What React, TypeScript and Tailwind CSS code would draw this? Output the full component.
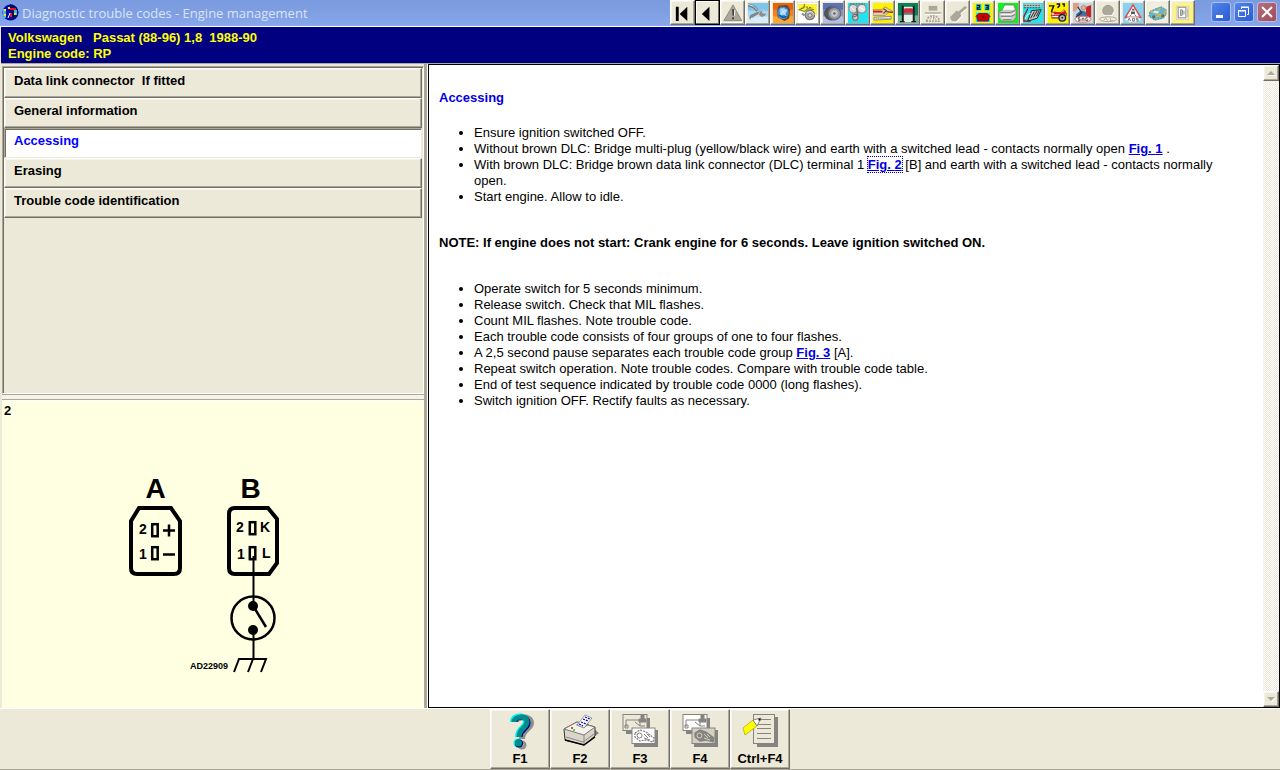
import type { ReactNode } from 'react';

type Tool = { label: string; art: ReactNode; focused?: boolean };

const tools: Tool[] = [
  {
    label: 'First',
    art: <path d="M3 4h3v15H3zM15 4v15L7 11.500z" fill="#000" />,
  },
  {
    label: 'Previous',
    focused: true,
    art: <path d="M12 4v15L4 11.500z" fill="#000" />,
  },
  {
    label: 'Warnings',
    art: (
      <>
        <path d="M10.500 2L19.500 18.500H1z" fill="#aca899" stroke="#8b887a" strokeWidth="1" />
        <path d="M9.500 6.500h2.500l-.5 7h-1.500zM9.500 15h2v2h-2z" fill="#44423c" />
        <path d="M12.500 7l-.5 6.500M2 20.500h18" stroke="#fff" />
      </>
    ),
  },
  {
    label: 'Repair',
    art: (
      <>
        <rect width="21" height="21" fill="#7cc6ee" />
        <rect y="8" width="21" height="6" fill="#a4d9f3" />
        <rect y="14" width="21" height="7" fill="#d6eef9" />
        <path d="M0 2l6 2 4 4" stroke="#777d82" strokeWidth="3" fill="none" />
        <path d="M0 1.500l6 2 4 4" stroke="#e4e4e0" strokeWidth="1" fill="none" />
        <path d="M4 17c-2-2 0-4 2-4l7-3" stroke="#7f868c" strokeWidth="3.500" fill="none" />
        <path d="M5 16l9-5" stroke="#d8dde0" strokeWidth="1.500" />
        <path d="M13 8l3-1-1 3 2 1 3-1-2 4-4 1-3-3z" fill="#8a9096" stroke="#dfe5e8" strokeWidth=".6" />
        <circle cx="4" cy="17" r="1.500" fill="#d6eef9" />
      </>
    ),
  },
  {
    label: 'Engine management',
    art: (
      <>
        <rect width="21" height="21" fill="#e8640c" />
        <path d="M0 7h21v14H0z" fill="#f58216" />
        <path d="M0 14h21v7H0z" fill="#ffa630" />
        <path d="M6 3l9-1 3 5-1 9-5 3-7-4-1-6z" fill="#5b4a3a" />
        <ellipse cx="10.500" cy="10.500" rx="6" ry="6.500" fill="#3f8fd4" />
        <path d="M7 7l4-2 4 3-2 4-5 1z" fill="#9fd4f6" />
        <path d="M6 12l4 3 5-1" stroke="#1c4c86" strokeWidth="1.200" fill="none" />
        <path d="M8 5l6 9M7 12l8-5" stroke="#d8efff" strokeWidth=".8" />
      </>
    ),
  },
  {
    label: 'Timing belt',
    art: (
      <>
        <rect width="21" height="21" fill="#fff" />
        <path d="M0 1h20v12l-7-4-12-1z" fill="#fff03a" />
        <path d="M7 1l-1 4-5 2 6 2 3-3 7 1" stroke="#8a9a10" strokeWidth="1.300" fill="none" />
        <path d="M3 6l4-2 8 1" stroke="#5c6a0c" strokeDasharray="2 1" fill="none" />
        <circle cx="12.500" cy="12.500" r="5" fill="#a9a9a9" stroke="#777" strokeWidth="1.200" />
        <path d="M9 10l5-1 3 3" stroke="#eee" fill="none" />
        <circle cx="12.500" cy="13" r="2" fill="#d8d8d8" stroke="#777" />
        <path d="M7 13l-3-2" stroke="#888" strokeWidth="2" />
      </>
    ),
  },
  {
    label: 'Wheels',
    art: (
      <>
        <rect width="21" height="21" fill="#5c74b4" />
        <rect y="7" width="21" height="14" fill="#8397cc" />
        <rect y="14" width="21" height="7" fill="#b3c0e4" />
        <ellipse cx="9" cy="11" rx="8" ry="7.500" fill="#50525c" />
        <circle cx="12" cy="11" r="6.500" fill="#9a9da4" stroke="#666a74" strokeWidth="1.500" />
        <circle cx="12" cy="11" r="4" fill="#c4c6cb" stroke="#7c8088" strokeDasharray="1 1" />
        <circle cx="12" cy="11" r="1.300" fill="#62656c" />
      </>
    ),
  },
  {
    label: 'Drive belts',
    art: (
      <>
        <rect width="21" height="21" fill="#20e4f0" />
        <path d="M1 2h18v8l-8 1v8H5l-1-8-3-3z" fill="#999" />
        <circle cx="5.500" cy="6" r="4.500" fill="#d8d8d8" stroke="#888" />
        <circle cx="14.500" cy="6" r="4.500" fill="#e4e4e4" stroke="#888" />
        <path d="M3 4l4 4M12 4l5 4" stroke="#fff" />
        <circle cx="7.500" cy="15" r="3" fill="#ccc" stroke="#666" />
        <path d="M9 5l1 8-5 2" stroke="#555" fill="none" />
        <path d="M2 1h16" stroke="#555" strokeDasharray="2 1" />
      </>
    ),
  },
  {
    label: 'Service',
    art: (
      <>
        <rect width="21" height="21" fill="#fff200" />
        <path d="M0 7h9l4-3 3 2 5 3-5 1-3 3H0z" fill="#d8d4c8" stroke="#8d7a28" strokeWidth=".7" />
        <path d="M0 8h10v2H0z" fill="#e01818" />
        <path d="M11 6l3 2-3 3M14 9l7 1" stroke="#8a2a10" strokeWidth="1.200" fill="none" />
        <path d="M1 15l18-1v3L1 18z" fill="#e8e8e8" stroke="#777" strokeWidth=".8" />
        <path d="M3 16.500h15" stroke="#777" strokeDasharray="1 1" />
      </>
    ),
  },
  {
    label: 'Lifting points',
    art: (
      <>
        <rect width="21" height="21" fill="#0d8058" />
        <rect y="13" width="21" height="8" fill="#6fb79c" />
        <path d="M6 4h10v16H6z" fill="#e4f1ea" />
        <path d="M5 3v16M16.500 3v16" stroke="#1a1a1a" strokeWidth="2" />
        <path d="M7 6h8l1 4H6z" fill="#e0283c" stroke="#801824" strokeWidth=".6" />
        <path d="M5 11.500h12" stroke="#333" strokeWidth="1.200" />
        <path d="M2 19.500h5M14 19.500h5" stroke="#222" strokeWidth="1.300" />
      </>
    ),
  },
  {
    label: 'Tyres',
    art: (
      <>
        <path d="M6 3h9v5H6z" fill="#aca899" />
        <path d="M2 10.500h17" stroke="#aca899" strokeWidth="1.500" />
        <path d="M2 12h17" stroke="#fff" />
        <path d="M4 19a6.500 5.500 0 0 1 13 0z" fill="#f4f2ea" stroke="#aca899" strokeWidth="2" strokeDasharray="2 1" />
        <path d="M7 18l2-3m2 3v-4m3 4l-2-3" stroke="#aca899" />
      </>
    ),
  },
  {
    label: 'Keys',
    art: (
      <>
        <path d="M18 3l-7 6-2-1-7 7 2 4 4 1 6-6-1-3 7-6z" fill="#aca899" />
        <path d="M5 20h4l6-7M14 11l6-5" stroke="#fff" fill="none" />
      </>
    ),
  },
  {
    label: 'Service intervals',
    art: (
      <>
        <rect width="21" height="21" fill="#fff200" />
        <path d="M3 1h6v7H3zM12 1h6v7h-6zM3 10h15v10H3z" fill="#20e4f0" />
        <path d="M4 2.500h3v2H4.500v2H8M13 2.500h3v4h-3m.5-2H16" stroke="#000" strokeWidth="1.200" fill="none" />
        <path d="M6 11h9l3 3-1 1-1 4H5l-1-4-1-1z" fill="#d00000" stroke="#600" strokeWidth=".7" />
        <path d="M9 14h3v2H9z" fill="#700" />
      </>
    ),
  },
  {
    label: 'Air conditioning',
    art: (
      <>
        <rect width="21" height="21" fill="#10f020" />
        <path d="M7 2h10l2 6v7l-3 4H4l-3-3V9l4-2z" fill="#c8c8c4" stroke="#7a7a78" strokeWidth=".8" />
        <path d="M7 3h9l1 4H5z" fill="#fff" />
        <path d="M2 10h11l5-2M3 14h11l4-2M5 17.500h9" stroke="#777" fill="none" />
        <path d="M3 12h11l4-2M4 15.700h10" stroke="#fff" fill="none" />
      </>
    ),
  },
  {
    label: 'Wiring diagrams',
    art: (
      <>
        <rect width="21" height="21" fill="#20e4f0" />
        <path d="M1 2.500h18" stroke="#c8c8c8" strokeWidth="3" />
        <path d="M1 2.500h18M1 5h17" stroke="#444" strokeDasharray="2 1" />
        <path d="M5 6l-4 8v5h7" stroke="#a01010" strokeWidth="1.300" fill="none" />
        <path d="M9 8l10-1-4 9-10 3z" fill="#c4c4c4" stroke="#222" />
        <path d="M8 16l4-7m-1 6l4-7m-1 6l3-6" stroke="#222" />
        <path d="M2 17l3-5 3-1" stroke="#fff" fill="none" />
      </>
    ),
  },
  {
    label: 'Troubleshooter',
    art: (
      <>
        <rect width="21" height="21" fill="#fff200" />
        <path d="M1 3h5l-2 5v2M9 1h3v2l-2 2M15 1h2v3" stroke="#111" strokeWidth="1.500" fill="none" />
        <path d="M4 10h9l4-3 3 6-6 3H4z" fill="#fff" stroke="#722" strokeWidth=".6" />
        <path d="M6 9l8 1 4-2 2 4H6z" fill="#e01818" />
        <path d="M3 13h9M4 15.500h8" stroke="#b02020" />
        <circle cx="15" cy="15.500" r="3.500" fill="#bbb" stroke="#222" strokeWidth="1.500" />
        <circle cx="15" cy="15.500" r="1" fill="#222" />
      </>
    ),
  },
  {
    label: 'Airbags',
    art: (
      <>
        <rect width="21" height="21" fill="#c4d8e6" />
        <path d="M0 0h6v5l-4 4H0z" fill="#d9a08c" />
        <path d="M14 4l5-2v13h-6z" fill="#c82420" />
        <path d="M3 12l5-4 5 1 2 5-6 1-4 1z" fill="#3f6ea4" />
        <circle cx="11" cy="5" r="2.500" fill="#e7ad89" stroke="#854" strokeWidth=".5" />
        <path d="M5 4l4 6-6 5" stroke="#333" strokeWidth="1.200" fill="none" />
        <ellipse cx="10.500" cy="17" rx="8.500" ry="3.200" fill="#fff" stroke="#d56a64" />
        <path d="M7.500 15.500H5.500v1.500h2v1.500h-2M9.500 19v-3h2v3M15.500 15.500h-2v3h2v-1.500" stroke="#555" fill="none" />
      </>
    ),
  },
  {
    label: 'Lamps',
    art: (
      <>
        <circle cx="10.500" cy="8" r="5.500" fill="#aca899" stroke="#9c9888" />
        <path d="M15 12l2-3M6 13h9" stroke="#fff" fill="none" />
        <ellipse cx="10.500" cy="17" rx="9" ry="2.500" fill="#f0ede2" stroke="#aca899" />
        <path d="M6 18.500l2-3 2 3m3-3v3h3" stroke="#aca899" fill="none" />
      </>
    ),
  },
  {
    label: 'Anti-lock brakes',
    art: (
      <>
        <rect width="21" height="21" fill="#85d2f4" />
        <path d="M10.500 2l8 13H2.500z" fill="#fff" stroke="#dc5048" strokeWidth="1.600" />
        <path d="M9.500 6h2.500v2H9.500zM8.500 9h4v2.500h-4z" fill="#555" />
        <path d="M9 12l-2 2m5-2l2 2" stroke="#666" />
        <ellipse cx="10.500" cy="17.500" rx="8" ry="2.800" fill="#fff" stroke="#b8d6e4" />
        <path d="M5 19l1.500-3 1.500 3m2-3h2v3h-2zm6 0h-2v1.500h2v1.500h-2" stroke="#666" strokeWidth=".9" fill="none" />
      </>
    ),
  },
  {
    label: 'Body electrics',
    art: (
      <>
        <rect width="21" height="21" fill="#f1eedf" />
        <path d="M2 9l6-3 6-2 5 3v5l-3 4-9 2-6-4z" fill="#66b6cc" stroke="#5b8e9c" strokeDasharray="2 1" />
        <path d="M2 8l6 3 5-6m-5 6l8 2 3-5M4 15l12-2" stroke="#e2b53c" fill="none" strokeWidth="1.200" />
        <path d="M7 8l5 1-2 2-5-1z" fill="#d4edf2" />
        <circle cx="6" cy="14.500" r="1.700" fill="#5a6a70" />
        <circle cx="15.500" cy="13.500" r="1.700" fill="#5a6a70" />
      </>
    ),
  },
  {
    label: 'Switches',
    art: (
      <>
        <rect width="21" height="21" fill="#fff676" />
        <rect x="3.500" y="3.500" width="13" height="14" fill="#efecdf" stroke="#d4d1c0" />
        <rect x="5.500" y="4.500" width="8" height="11" fill="#fff" stroke="#8f8d82" />
        <path d="M8 7l2 .5v5l-2 1zM11.500 8v4" stroke="#888" fill="#ccc" />
        <path d="M15.500 6v9" stroke="#b9b6a6" />
      </>
    ),
  },
];

const sections = [
  'Data link connector  If fitted',
  'General information',
  'Accessing',
  'Erasing',
  'Trouble code identification',
];

function Diagrams({ dark }: { dark: boolean }) {
  return (
    <>
      <path d="M8 6h24v16H8zM16 18h24v17H16z" fill="#868480" />
      <rect x="5" y="2.500" width="24" height="16" fill={dark ? '#fff' : '#ece9d8'} stroke="#868480" />
      <path d="M8 15V8h14v6h5M10 13v3H7v-3z" fill="none" stroke="#868480" />
      <path d="M23 3h3v4h2v3h-7V7h2zM17 10l5 4" fill="#868480" stroke="#868480" />
      <rect x="14" y="16" width="23" height="15.500" fill={dark ? '#d4d1c3' : '#fff'} stroke="#868480" />
      <path
        d="M17 21l5-3 6 2 8 6-1 4-7-2-6 1-5-4z"
        fill={dark ? '#868480' : '#fff'}
        stroke="#868480"
        strokeWidth="1.300"
        strokeDasharray={dark ? undefined : '2 1'}
      />
      <circle cx="21.500" cy="23.500" r="2.500" fill="none" stroke={dark ? '#d4d1c3' : '#868480'} />
      <path d="M26 22l4 4m-1-4l3 3m-6 1l6 2" stroke={dark ? '#d4d1c3' : '#868480'} />
    </>
  );
}

const functionKeys: { label: string; title: string; art: ReactNode }[] = [
  {
    label: 'F1',
    title: 'Help',
    art: (
      <>
        <g fill="none" stroke="#908e88" strokeWidth="6">
          <path d="M18 10c0-6 15-7 15 1 0 6-9 6-9 16" />
          <circle cx="24" cy="33" r="1.500" />
        </g>
        <g fill="none" stroke="#00f0f0" strokeWidth="6">
          <path d="M15 10c0-7 13-8 13 0 0 6-8 6-8 15" />
          <circle cx="20" cy="31" r="1.500" />
        </g>
        <path d="M17 10c0-6 13-7 13 1 0 6-8 6-8 14" fill="none" stroke="#000080" strokeWidth="5" />
        <path d="M16 10c0-6 13-7 13 0 0 6-8 6-8 15" fill="none" stroke="#008c8c" strokeWidth="5" />
        <circle cx="21" cy="31.500" r="4" fill="#000080" />
        <circle cx="20.500" cy="31" r="3.500" fill="#008c8c" />
      </>
    ),
  },
  {
    label: 'F2',
    title: 'Print',
    art: (
      <>
        <path d="M26 33l15-12-5-4-12 9z" fill="#8b8983" />
        <path d="M6 17l13-7 18 5v9L26 33 7 28z" fill="#d9d6c9" stroke="#333" />
        <path d="M6 17l20 6 11-8-18-5z" fill="#f4f2e9" stroke="#777" />
        <path d="M26 23v9M8 25l17 5 11-8" stroke="#888" fill="none" />
        <path d="M7 28l19 5 11-8" stroke="#000" strokeWidth="1.500" fill="none" />
        <path d="M18 13l8 3 5-4-8-2z" fill="#555" />
        <path d="M19 13l8-10 7 3-8 10z" fill="#fff" stroke="#777" strokeWidth=".7" />
        <path d="M27 5l5 2m-7 0l5 2m-7 1l5 2m-7 0l4 2" stroke="#0000d0" strokeWidth="1.300" strokeDasharray="2 1" />
        <path d="M13 16h2" stroke="#f00" strokeWidth="1.500" />
        <path d="M15 18h2" stroke="#0d0" strokeWidth="1.500" />
      </>
    ),
  },
  { label: 'F3', title: 'Previous figure', art: <Diagrams dark={false} /> },
  { label: 'F4', title: 'Next figure', art: <Diagrams dark /> },
  {
    label: 'Ctrl+F4',
    title: 'Notes',
    art: (
      <>
        <path d="M19 5h21v30H19z" fill="#868480" />
        <rect x="15.500" y="2.500" width="21" height="29" fill="#ece9d8" stroke="#868480" />
        <path d="M22 7.500h11M20 12.500h13M19 16.500h14M19 21.500h14M19 26.500h14" stroke="#868480" />
        <path d="M5 16l10-8 4 6-12 9z" fill="#ff0" stroke="#989500" strokeWidth=".6" />
        <path d="M15 8l8-2-4 8z" fill="#fff" stroke="#868480" />
        <path d="M20.500 6.500h2v2h-2z" fill="#111" />
      </>
    ),
  },
];

const raised =
  'border border-t-white border-l-white border-r-[#716f64] border-b-[#716f64] shadow-[inset_-1px_-1px_0_#aca899,inset_1px_1px_0_#f6f4ea]';

function TitleBar() {
  return (
    <header className="flex h-[27px] items-start border-b border-white bg-linear-to-b from-[#7b9be0] via-[#809fe3] to-[#87a8ea]">
      <svg className="mt-1 ml-0.5 size-[17px] shrink-0" viewBox="0 0 17 17" aria-hidden="true">
        <circle cx="8.500" cy="8.500" r="8" fill="#0808a8" />
        <path d="M8 0a8.500 8.500 0 0 1 8 10l-5 6z" fill="#001060" />
        <path d="M1 5h3v9H1z" fill="#38b8e8" />
        <path d="M2 5h2v2H2zM2 10h2v2H2z" fill="#f4e820" />
        <path d="M8 4h6v2H8zM8 9h2v4H8z" fill="#e81818" />
        <path d="M12 6h3v5h-3z" fill="#30c0f0" />
        <path d="M12 9h2v2h-2zM6 3h2v2H6z" fill="#ffe020" />
        <path d="M8 9l-2 5" stroke="#fff" />
      </svg>
      <h1 className="ml-[3px] flex-1 truncate font-['Open_Sans','Noto_Sans',sans-serif] text-[13px] leading-[26px] font-medium text-[#d8e4f8]">
        Diagnostic trouble codes - Engine management
      </h1>
      <div className="flex">
        {tools.map((tool) => (
          <button
            key={tool.label}
            type="button"
            aria-label={tool.label}
            className={
              tool.focused
                ? 'h-[25px] w-[25px] border border-black bg-[#ece9d8] pl-0.5 shadow-[inset_-1px_-1px_0_#716f64,inset_1px_1px_0_#fff]'
                : `h-[25px] w-[25px] bg-[#ece9d8] pl-0.5 ${raised}`
            }
          >
            <svg className="size-5" viewBox="0 0 21 21" aria-hidden="true">
              {tool.art}
            </svg>
          </button>
        ))}
      </div>
      <div className="mt-0.5 mr-[3px] ml-4 flex gap-[3px]">
        <button type="button" aria-label="Minimize" className="size-5 rounded-[3px] border border-[#a9c0f0] bg-linear-to-br from-[#5484ea] to-[#2a5bd3]">
          <svg className="size-[18px]" viewBox="0 0 18 18" aria-hidden="true">
            <path d="M4 12h7v3H4z" fill="#fff" />
          </svg>
        </button>
        <button type="button" aria-label="Restore" className="size-5 rounded-[3px] border border-[#a9c0f0] bg-linear-to-br from-[#5484ea] to-[#2a5bd3]">
          <svg className="size-[18px]" viewBox="0 0 18 18" fill="none" stroke="#fff" aria-hidden="true">
            <path d="M6.500 6V4.500h7v7H12M6 4h8" />
            <path d="M3.500 7.500h7v6h-7zM3 8h8" />
          </svg>
        </button>
        <button type="button" aria-label="Close" className="size-5 rounded-[3px] border border-[#c9b8dc] bg-linear-to-br from-[#b2707e] to-[#a14a5c]">
          <svg className="size-[18px]" viewBox="0 0 18 18" aria-hidden="true">
            <path d="M4 4l10 10m0-10l-10 10" stroke="#fff" strokeWidth="2" />
          </svg>
        </button>
      </div>
    </header>
  );
}

function Figure() {
  return (
    <svg
      className="mt-[46px] ml-[108px] h-[220px] w-[190px] font-['Liberation_Sans',Arial,sans-serif] font-bold"
      viewBox="0 0 190 220"
      role="img"
      aria-label="Data link connector terminals"
    >
      <g fontSize="28" textAnchor="middle">
        <text x="45.500" y="33">A</text>
        <text x="140.500" y="33">B</text>
      </g>
      <g fill="none" stroke="#000" strokeWidth="4">
        <path d="M29 43h32l9 13v47q0 6-6 6H27q-6 0-6-6V56z" />
        <path d="M125 43h33l9 11v44l-8 11h-34q-6 0-6-6V49q0-6 6-6z" />
      </g>
      <g fill="none" stroke="#000" strokeWidth="2.500">
        <rect x="42.200" y="59.200" width="5.500" height="12" />
        <rect x="42.200" y="82.200" width="5.500" height="12" />
        <rect x="139.800" y="57.200" width="5.500" height="12" />
        <rect x="139.800" y="82.200" width="5.500" height="12" />
        <path d="M53 65.500h12M59 59.500v12M53 89.500h12" />
      </g>
      <g fontSize="14">
        <text x="29" y="69">2</text>
        <text x="29" y="94">1</text>
        <text x="126" y="67">2</text>
        <text x="127" y="94">1</text>
        <text x="150" y="67">K</text>
        <text x="152" y="93">L</text>
      </g>
      <g fill="none" stroke="#000">
        <path d="M143.500 91v50M143.500 165v28" strokeWidth="2" />
        <circle cx="143" cy="153" r="21.500" strokeWidth="2.500" />
        <path d="M145 144l11 18" strokeWidth="2.500" />
        <path d="M124 207l5-13h27l-5 13M143 194l-5 13" strokeWidth="2" />
      </g>
      <circle cx="143" cy="141" r="5" />
      <circle cx="143" cy="165" r="5" />
      <text x="80" y="204" fontSize="9">AD22909</text>
    </svg>
  );
}

function FigLink({ n, focused }: { n: number; focused?: boolean }) {
  return (
    <a
      href={`#fig-${n}`}
      className={
        focused
          ? 'font-bold text-[#0000e0] underline outline-1 outline-dotted outline-[#0000b0]'
          : 'font-bold text-[#0000e0] underline'
      }
    >
      Fig. {n}
    </a>
  );
}

function ScrollBar() {
  return (
    <div className="flex w-4 shrink-0 flex-col justify-between bg-[repeating-conic-gradient(#ece9d8_0_25%,#fff_0_50%)] bg-size-[2px_2px]">
      <button type="button" aria-label="Scroll up" className={`size-4 bg-[#ece9d8] ${raised}`}>
        <svg className="size-3.5" viewBox="0 0 14 14" aria-hidden="true">
          <path d="M4 10l4-4 4 4z" fill="#fff" />
          <path d="M3 9l4-4 4 4z" fill="#aca899" />
        </svg>
      </button>
      <button type="button" aria-label="Scroll down" className={`size-4 bg-[#ece9d8] ${raised}`}>
        <svg className="size-3.5" viewBox="0 0 14 14" aria-hidden="true">
          <path d="M4 6l4 4 4-4z" fill="#fff" />
          <path d="M3 5l4 4 4-4z" fill="#aca899" />
        </svg>
      </button>
    </div>
  );
}

export default function App() {
  return (
    <div className="flex min-h-screen flex-col bg-[#ece9d8] font-['Liberation_Sans',Arial,sans-serif] text-[13px] leading-4 text-black">
      <TitleBar />
      <div className="ml-px border-b border-[#aca899] bg-[#000080] px-[7px] pt-[3px] pb-px font-bold whitespace-pre text-[#ffff00]">
        <p>Volkswagen   Passat (88-96) 1,8  1988-90</p>
        <p>Engine code: RP</p>
      </div>

      <main className="flex flex-1">
        <div className="flex w-[428px] shrink-0 flex-col border-r border-white pl-0.5">
          <div className="flex flex-1 flex-col border-r-[3px] border-[#aca899] pt-0.5">
            <nav className="h-[328px] border-t border-r border-b border-l border-t-[#aca899] border-r-white border-b-white border-l-[#aca899] shadow-[inset_1px_1px_0_#716f64]">
              <div className="flex flex-col pt-px pr-px pl-px">
                {sections.map((name) => (
                  <button
                    key={name}
                    type="button"
                    className={
                      name === 'Accessing'
                        ? 'h-[30px] border border-t-[#aca899] border-r-[#ece9d8] border-b-[#ece9d8] border-l-[#aca899] bg-white pb-1 pl-[9px] text-left font-bold whitespace-pre text-[#0000ff] shadow-[inset_1px_1px_0_#716f64]'
                        : `h-[30px] pb-1 pl-[9px] text-left font-bold whitespace-pre ${raised}`
                    }
                  >
                    {name}
                  </button>
                ))}
              </div>
            </nav>
            <div className="h-1.5 border-t border-b border-[#aca899] bg-[#f6f4ea]" />
            <section className="flex-1 border-t border-white bg-[#ffffe1] pb-5">
              <p className="pt-0.5 pl-0.5 font-bold">2</p>
              <Figure />
            </section>
          </div>
        </div>

        <article className="flex min-w-0 flex-1 border border-black bg-white">
          <div className="flex-1 pt-[25px] pr-8 pl-[10px]">
            <h2 className="font-bold text-[#0000e0]">Accessing</h2>
            <ul className="mt-[19px] list-disc pl-[35px]">
              <li>Ensure ignition switched OFF.</li>
              <li>
                Without brown DLC: Bridge multi-plug (yellow/black wire) and earth with a switched lead - contacts
                normally open <FigLink n={1} /> .
              </li>
              <li>
                With brown DLC: Bridge brown data link connector (DLC) terminal 1 <FigLink n={2} focused /> [B] and
                earth with a switched lead - contacts normally open.
              </li>
              <li>Start engine. Allow to idle.</li>
            </ul>
            <p className="mt-[30px] font-bold">
              NOTE: If engine does not start: Crank engine for 6 seconds. Leave ignition switched ON.
            </p>
            <ul className="mt-[30px] list-disc pl-[35px]">
              <li>Operate switch for 5 seconds minimum.</li>
              <li>Release switch. Check that MIL flashes.</li>
              <li>Count MIL flashes. Note trouble code.</li>
              <li>Each trouble code consists of four groups of one to four flashes.</li>
              <li>
                A 2,5 second pause separates each trouble code group <FigLink n={3} /> [A].
              </li>
              <li>Repeat switch operation. Note trouble codes. Compare with trouble code table.</li>
              <li>End of test sequence indicated by trouble code 0000 (long flashes).</li>
              <li>Switch ignition OFF. Rectify faults as necessary.</li>
            </ul>
          </div>
          <ScrollBar />
        </article>
      </main>

      <footer className="flex justify-center border-t border-b border-t-white border-b-[#aca899]">
        {functionKeys.map((key) => (
          <button
            key={key.label}
            type="button"
            title={key.title}
            className={`flex h-[60px] w-[60px] flex-col items-center pt-0.5 font-bold ${raised}`}
          >
            <svg className="h-[39px] w-[44px]" viewBox="0 0 44 39" aria-hidden="true">
              {key.art}
            </svg>
            <span>{key.label}</span>
          </button>
        ))}
      </footer>
    </div>
  );
}
